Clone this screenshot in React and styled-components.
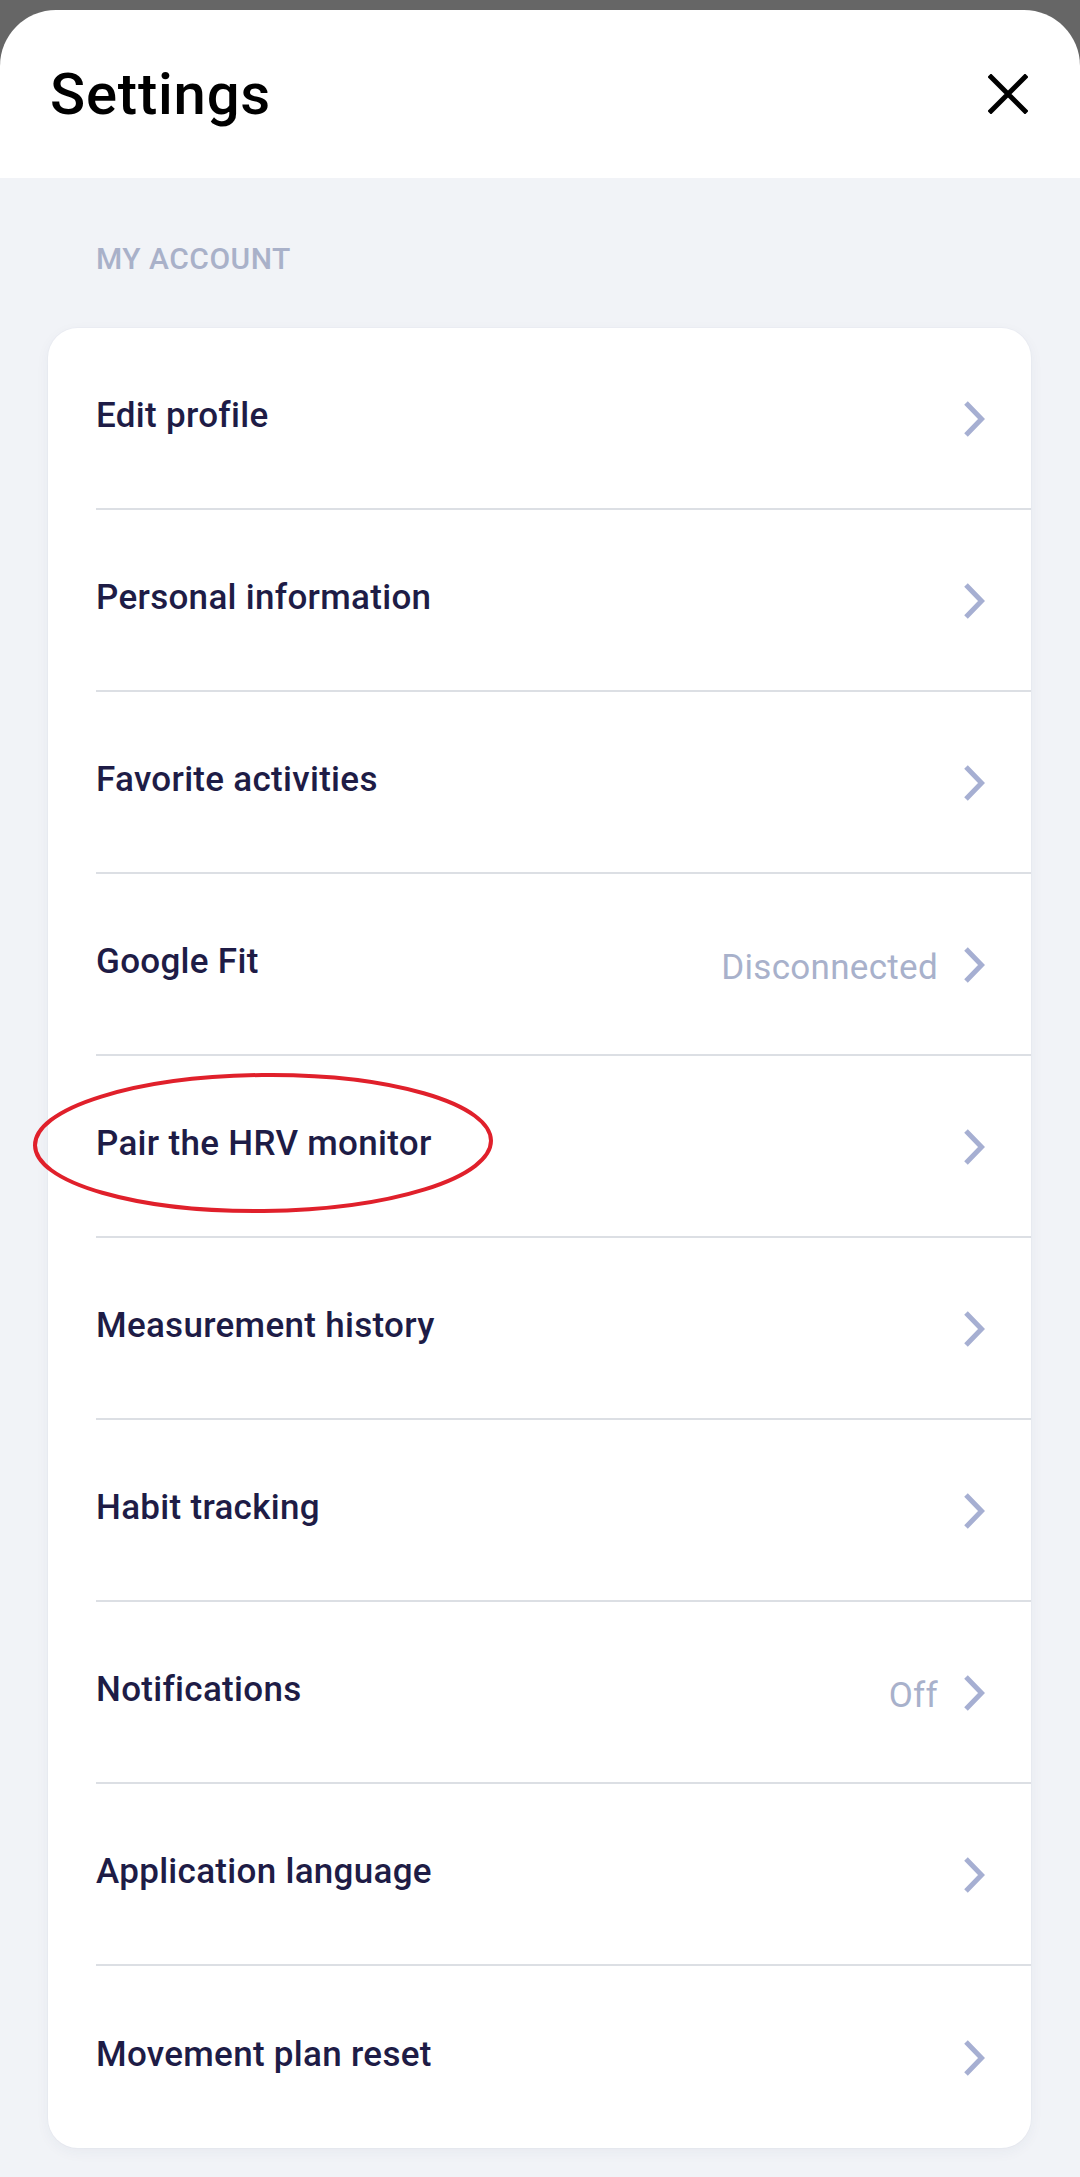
import React from "react";
import styled, { createGlobalStyle } from "styled-components";

const GlobalStyle = createGlobalStyle`
  html, body {
    margin: 0;
    padding: 0;
    background: #f1f3f7;
    font-family: Roboto, "Liberation Sans", Arial, sans-serif;
  }
  * { box-sizing: border-box; }
`;

const Page = styled.div`
  width: 1080px;
  min-height: 2177px;
  background: #f1f3f7;
  display: flex;
  flex-direction: column;
`;

const Backdrop = styled.div`
  background: #666666;
  padding-top: 10px;
`;

const Header = styled.header`
  height: 168px;
  background: #ffffff;
  border-radius: 56px 56px 0 0;
  display: flex;
  align-items: center;
  justify-content: space-between;
  padding: 0 52px 0 50px;
`;

const Title = styled.h1`
  margin: 0;
  font-size: 58px;
  font-weight: 500;
  color: #000000;
  line-height: 1;
  letter-spacing: 0.8px;
`;

const CloseButton = styled.button`
  border: 0;
  background: none;
  padding: 0;
  width: 40px;
  height: 40px;
  display: flex;
  align-items: center;
  justify-content: center;
`;

const Content = styled.main`
  padding: 66px 49px 31px 48px;
  display: flex;
  flex-direction: column;
`;

const SectionLabel = styled.div`
  font-size: 30px;
  line-height: 1;
  font-weight: 500;
  color: #a9b1c9;
  padding-left: 48px;
  margin-bottom: 54px;
  letter-spacing: 0.5px;
`;

const Card = styled.section`
  background: #ffffff;
  border-radius: 30px;
  padding-left: 48px;
  box-shadow: 0 4px 14px rgba(40, 50, 90, 0.05), 0 0 0 1px rgba(40, 50, 90, 0.02);
  display: flex;
  flex-direction: column;
`;

const Row = styled.div`
  position: relative;
  height: 182px;
  display: flex;
  align-items: center;
  padding-right: 46px;
  border-bottom: ${(p) => (p.$last ? "none" : "2px solid #dcdfe4")};
`;

const Label = styled.span`
  flex: 1;
  font-size: 35px;
  font-weight: 500;
  color: #1e1c46;
  line-height: 1;
  letter-spacing: 0.3px;
  padding-bottom: 6px;
`;

const Value = styled.span`
  font-size: 35px;
  font-weight: 400;
  color: #a8b1cb;
  line-height: 1;
  letter-spacing: 0.3px;
  margin-right: 25px;
  padding-top: 6px;
`;

const Chevron = styled.svg`
  width: 22px;
  height: 36px;
  flex-shrink: 0;
  margin-top: 2px;
`;

const Annotation = styled.svg`
  position: absolute;
  left: -66px;
  top: 15px;
  width: 466px;
  height: 144px;
  pointer-events: none;
  overflow: visible;
`;

const ChevronIcon = () => (
  <Chevron viewBox="0 0 22 36" fill="none">
    <path
      d="M3 2 L18.5 18 L3 34"
      stroke="#a6afd2"
      strokeWidth="5"
      strokeLinecap="butt"
      strokeLinejoin="miter"
    />
  </Chevron>
);

const CloseIcon = () => (
  <svg width="40" height="40" viewBox="0 0 40 40" fill="none">
    <path d="M3 3 L37 37 M37 3 L3 37" stroke="#000" strokeWidth="5" strokeLinecap="square" />
  </svg>
);

const items = [
  { label: "Edit profile" },
  { label: "Personal information" },
  { label: "Favorite activities" },
  { label: "Google Fit", value: "Disconnected" },
  { label: "Pair the HRV monitor", circled: true },
  { label: "Measurement history" },
  { label: "Habit tracking" },
  { label: "Notifications", value: "Off" },
  { label: "Application language" },
  { label: "Movement plan reset" },
];

export default function App() {
  return (
    <>
      <GlobalStyle />
      <Page>
        <Backdrop>
          <Header>
            <Title>Settings</Title>
            <CloseButton aria-label="Close">
              <CloseIcon />
            </CloseButton>
          </Header>
        </Backdrop>
        <Content>
          <SectionLabel>MY ACCOUNT</SectionLabel>
          <Card>
            {items.map((it, i) => (
              <Row key={it.label} $last={i === items.length - 1}>
                <Label>{it.label}</Label>
                {it.value && <Value>{it.value}</Value>}
                <ChevronIcon />
                {it.circled && (
                  <Annotation viewBox="0 0 466 144">
                    <ellipse
                      cx="233"
                      cy="72"
                      rx="228"
                      ry="68"
                      fill="none"
                      stroke="#e0202b"
                      strokeWidth="4"
                      transform="rotate(-0.6 233 72)"
                    />
                  </Annotation>
                )}
              </Row>
            ))}
          </Card>
        </Content>
      </Page>
    </>
  );
}
